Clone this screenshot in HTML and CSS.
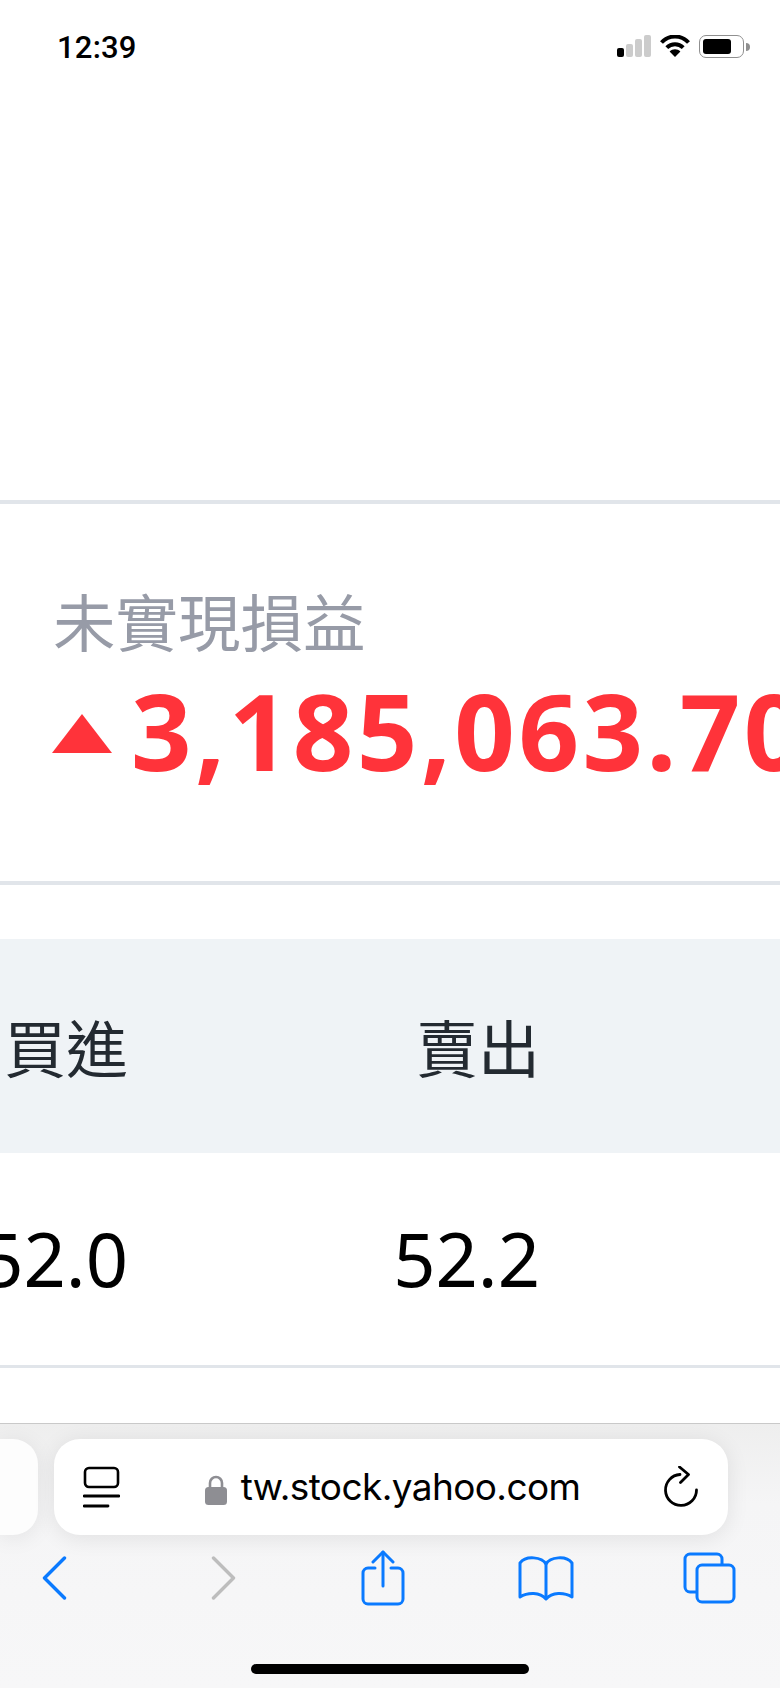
FILE: index.html
```html
<!DOCTYPE html>
<html lang="zh-Hant">
<head>
<meta charset="utf-8">
<title>未實現損益</title>
<link rel="stylesheet" href="styles.css">
</head>
<body>
<div class="phone">
  <header class="status">
    <span class="time">12:39</span>
    <div class="status-icons">
      <div class="signal"><i class="bar b1 on"></i><i class="bar b2"></i><i class="bar b3"></i><i class="bar b4"></i></div>
      <svg class="wifi" width="30" height="22" viewBox="0 0 30 22"><path d="M1.5 7.5C9-.5 21-.5 28.5 7.5" fill="none" stroke="#000" stroke-width="4"/><path d="M6.8 12.6c4.6-4.6 11.8-4.6 16.4 0" fill="none" stroke="#000" stroke-width="4"/><path d="M15 22l-5.4-5.4c3-3 7.8-3 10.8 0z" fill="#000"/></svg>
      <div class="battery"><div class="battery-fill"></div></div>
      <div class="battery-nub"></div>
    </div>
  </header>
  <main class="content">
    <section class="pnl">
      <div class="pnl-label">未實現損益</div>
      <div class="pnl-value"><span class="tri"></span><span class="amount">3,185,063.70</span></div>
    </section>
    <section class="quote">
      <div class="row head"><div class="cell c1">買進</div><div class="cell c2">賣出</div></div>
      <div class="row data"><div class="cell c1">52.0</div><div class="cell c2">52.2</div></div>
    </section>
  </main>
  <footer class="toolbar">
    <div class="tabs-row">
      <div class="prev-tab"></div>
      <div class="address">
        <svg class="reader" width="37" height="42" viewBox="0 0 37 42" fill="none" stroke="#000"><rect x="2" y="2" width="33" height="19" rx="4" stroke-width="2.6"/><path d="M1 30h35" stroke-width="2.8" stroke-linecap="round"/><path d="M1 40h24" stroke-width="2.8" stroke-linecap="round"/></svg>
        <div class="url">
          <svg class="lock" width="22" height="30" viewBox="0 0 22 30"><path d="M5 13V8a6 6 0 0 1 12 0v5" fill="none" stroke="#8e8e93" stroke-width="2.6"/><rect x="0" y="12" width="22" height="18" rx="3.500" fill="#8e8e93"/></svg>
          <span class="url-text">tw.stock.yahoo.com</span>
        </div>
        <svg class="reload" width="36" height="42" viewBox="0 0 36 42" fill="none" stroke="#000" stroke-width="2.8" stroke-linecap="round" stroke-linejoin="round"><path d="M17 8.500A15.500 15.500 0 1 0 33.500 24"/><path d="M16.500 1l9 7.500-8 8"/></svg>
      </div>
    </div>
    <nav class="nav">
      <svg class="ic-back" width="25" height="44" viewBox="0 0 25 44" fill="none" stroke="#0a7aff" stroke-width="3.400" stroke-linecap="round" stroke-linejoin="round"><path d="M22.500 2L2.500 22l20 20"/></svg>
      <svg class="ic-fwd" width="25" height="44" viewBox="0 0 25 44" fill="none" stroke="#bdbdbd" stroke-width="3.400" stroke-linecap="round" stroke-linejoin="round"><path d="M2.500 2l20 20-20 20"/></svg>
      <svg class="ic-share" width="44" height="56" viewBox="0 0 44 56" fill="none" stroke="#0a7aff" stroke-width="3" stroke-linecap="round" stroke-linejoin="round"><path d="M14 18H7a5 5 0 0 0-5 5v26a5 5 0 0 0 5 5h30a5 5 0 0 0 5-5V23a5 5 0 0 0-5-5h-7"/><path d="M22 36V2"/><path d="M12 12L22 2l10 10"/></svg>
      <svg class="ic-book" width="56" height="46" viewBox="0 0 56 46" fill="none" stroke="#0a7aff" stroke-width="3" stroke-linecap="round" stroke-linejoin="round"><path d="M28 9C24 2 8 0 2 8v34c8-5 20-5 26 2 6-7 18-7 26-2V8C48 0 32 2 28 9z"/><path d="M28 9v34"/></svg>
      <svg class="ic-tabs" width="53" height="52" viewBox="0 0 53 52" fill="none" stroke="#0a7aff" stroke-width="3" stroke-linejoin="round"><path d="M39 13V7a5 5 0 0 0-5-5H7a5 5 0 0 0-5 5v28a5 5 0 0 0 5 5h6"/><rect x="14" y="13" width="37" height="37" rx="5"/></svg>
    </nav>
    <div class="home-indicator"></div>
  </footer>
</div>
</body>
</html>
```
FILE: styles.css
```css
* { box-sizing: border-box; }
html, body { margin: 0; padding: 0; background: #fff; }
body { font-family: "Noto Sans", "Noto Sans CJK TC", sans-serif; }
.phone { width: 780px; height: 1688px; overflow: hidden; display: flex; flex-direction: column; background: #fff; }

/* status bar */
.status { height: 500px; flex: none; display: flex; justify-content: space-between; align-items: flex-start; padding: 30px 30px 0 57px; }
.time { font: 500 31px/36px "Roboto", sans-serif; color: #000; letter-spacing: .2px; }
.status-icons { display: flex; align-items: flex-start; padding-top: 5px; }
.signal { display: flex; align-items: flex-end; gap: 2px; height: 22px; margin-right: 9px; }
.bar { width: 7px; background: #ccc; border-radius: 2px; display: block; }
.bar.on { background: #000; }
.b1 { height: 9px; }
.b2 { height: 13px; }
.b3 { height: 18px; }
.b4 { height: 22px; }
.wifi { margin-right: 9px; }
.battery { width: 45px; height: 23px; border: 1.500px solid #8f8f8f; border-radius: 7px; padding: 2.500px; }
.battery-fill { width: 28px; height: 15px; background: #000; border-radius: 3px; }
.battery-nub { width: 4px; height: 8px; background: #8f8f8f; border-radius: 0 4px 4px 0; margin: 8px 0 0 2px; }

/* content */
.content { flex: 1; min-height: 0; }
.pnl { height: 385px; border-top: 4px solid #e1e5ea; border-bottom: 4px solid #e1e5ea; padding: 72px 0 0 52px; }
.pnl-label { font: 400 62.500px/88px "Noto Sans CJK TC", sans-serif; color: #979ba7; padding-left: 1px; }
.pnl-value { display: flex; align-items: center; white-space: nowrap; margin-top: 10px; }
.tri { width: 0; height: 0; flex: none; border-left: 30px solid transparent; border-right: 30px solid transparent; border-bottom: 39px solid #ff333a; margin-right: 19px; margin-top: 6px; }
.amount { font: 700 106px/112px "Noto Sans", sans-serif; letter-spacing: 3.400px; color: #ff333a; }

.quote { margin-top: 54px; }
.row { display: grid; grid-template-columns: 128px 412px; align-items: center; }
.cell { display: flex; justify-content: flex-end; white-space: nowrap; }
.head { height: 214px; background: #eff3f6; color: #232a31; font: 400 62px/76px "Noto Sans CJK TC", sans-serif; }
.data { height: 215px; border-bottom: 3px solid #e1e5ea; color: #000; font: 400 74px/90px "Noto Sans", sans-serif; }

/* browser toolbar */
.toolbar { height: 265px; flex: none; border-top: 1px solid #c9c9c9; background: linear-gradient(#eeeeee, #f5f5f6 30%, #f7f7f8); display: flex; flex-direction: column; }
.tabs-row { display: flex; gap: 16px; height: 96px; margin-top: 15px; flex: none; }
.prev-tab { width: 38px; background: #fdfdfd; border-radius: 0 25px 25px 0; box-shadow: 0 3px 22px rgba(0,0,0,.08); }
.address { width: 674px; background: #fff; border-radius: 26px; box-shadow: 0 3px 22px rgba(0,0,0,.09); display: flex; align-items: center; justify-content: space-between; padding: 0 29px 0 29px; }
.url { display: flex; align-items: center; gap: 14px; margin-right: -2px; }
.lock { margin-top: 5px; }
.url-text { font: 400 37px/50px "Inter", sans-serif; color: #000; letter-spacing: -.6px; }
.nav { display: flex; align-items: center; height: 56px; margin-top: 15px; padding-left: 42px; flex: none; }
.ic-fwd { margin-left: 144px; }
.ic-share { margin-left: 125px; }
.ic-book { margin-left: 113px; }
.ic-tabs { margin-left: 109px; }
.home-indicator { width: 278px; height: 10px; border-radius: 5px; background: #000; margin: 58px auto 0; flex: none; }
```
